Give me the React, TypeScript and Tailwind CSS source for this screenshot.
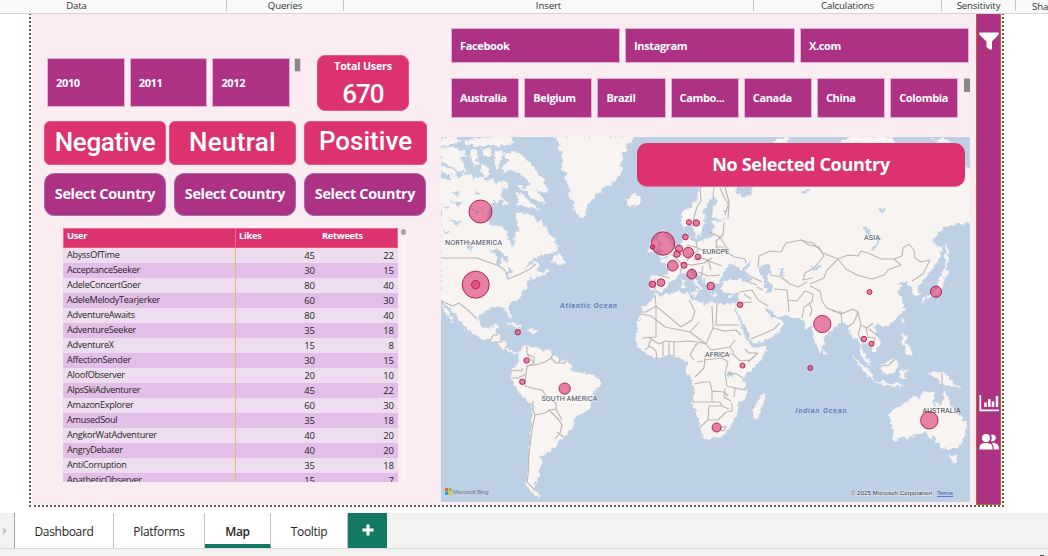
import type { ReactNode } from "react";
import { clsx } from "clsx";

const users: [string, number, number][] = [
  ["AbyssOfTime", 45, 22],
  ["AcceptanceSeeker", 30, 15],
  ["AdeleConcertGoer", 80, 40],
  ["AdeleMelodyTearjerker", 60, 30],
  ["AdventureAwaits", 80, 40],
  ["AdventureSeeker", 35, 18],
  ["AdventureX", 15, 8],
  ["AffectionSender", 30, 15],
  ["AloofObserver", 20, 10],
  ["AlpsSkiAdventurer", 45, 22],
  ["AmazonExplorer", 60, 30],
  ["AmusedSoul", 35, 18],
  ["AngkorWatAdventurer", 40, 20],
  ["AngryDebater", 40, 20],
  ["AntiCorruption", 35, 18],
  ["ApatheticObserver", 15, 7],
];

// Polygons use the same pixel grid as the report page.
const land = [
  // North America
  "441,178 447,181 452,176 460,179 463,173 470,174 475,179 481,177 487,182 492,178 495,184 501,181 504,188 500,195 503,199 497,203 493,200 491,207 488,212 486,219 490,225 502,227 507,233 508,239 512,247 515,245 514,238 518,232 519,226 516,218 517,213 524,213 530,215 534,215 536,223 541,220 545,226 548,233 554,240 558,246 556,251 549,254 541,254 536,258 529,263 523,270 532,264 537,262 539,267 537,270 543,273 547,269 549,272 541,276 535,278 530,278 527,283 527,288 522,291 521,296 518,300 511,303 508,308 512,317 509,318 506,311 503,307 493,307 487,309 480,315 478,320 482,328 488,330 491,326 499,325 495,333 500,335 499,341 505,341 507,349 515,352 518,354 511,353 503,348 495,342 488,340 480,337 468,331 462,323 455,314 448,305 441,302",
  "443,304 446,309 450,314 454,322 452,321 447,315 443,309",
  // Arctic islands
  "441,137 455,137 460,141 452,144 441,146",
  "463,142 475,139 490,137 512,137 512,144 500,146 488,145 478,147 472,144 465,145",
  "441,148 452,147 458,150 465,151 466,157 459,158 463,163 467,170 459,171 451,166 446,162 441,163",
  "441,165 447,168 455,171 457,176 449,174 441,172",
  "472,149 477,151 476,158 479,165 475,166 472,160 469,155",
  "482,149 491,149 492,154 488,158 484,156",
  "482,163 488,168 489,176 484,178 481,171",
  "495,152 501,151 504,153 500,160 498,169 495,166",
  "505,152 518,153 523,158 529,162 533,168 539,174 543,180 547,187 548,193 541,192 535,188 541,197 545,204 537,200 531,198 528,191 522,191 530,184 526,179 520,174 514,171 507,170 504,174 501,168 506,163 511,162 505,158",
  "516,192 523,195 528,201 532,203 540,210 532,208 525,205 517,205 519,199",
  "503,180 509,184 508,188 502,185",
  "501,199 507,203 509,206 503,205",
  "518,184 523,185 522,190 518,188",
  // Newfoundland and Great Lakes margins
  "558,253 562,257 566,264 559,266 554,261 551,263 554,256",
  // Greenland
  "555,137 560,144 558,150 564,153 561,158 563,163 561,170 568,172 565,178 568,184 570,190 569,196 574,204 573,209 577,214 583,219 586,210 588,203 594,199 595,194 602,192 603,187 610,185 615,180 620,174 623,168 618,164 624,160 621,154 628,150 625,145 631,143 633,137",
  "625,199 630,198 633,194 640,197 641,201 637,205 633,207 627,205 629,202",
  // Caribbean
  "507,324 513,322 519,326 524,329 518,328 512,325",
  "528,330 534,329 539,332 534,333 528,332",
  // South America
  "518,352 522,347 528,345 531,349 537,347 543,350 550,350 555,357 561,360 567,360 571,366 573,371 580,373 590,374 596,377 600,381 600,386 594,391 591,399 590,408 583,413 576,416 573,427 567,434 564,439 557,441 556,447 550,450 546,455 540,457 542,463 538,470 540,475 535,483 534,491 540,497 533,495 526,484 528,473 529,453 532,427 533,403 522,397 516,387 511,377 513,368 518,363 520,356",
  // Eurasia
  "700,187 697,200 691,207 683,212 681,222 685,228 690,224 694,229 696,237 700,235 702,225 705,220 703,212 709,199 715,197 717,202 712,210 713,218 722,219 731,218 721,221 712,222 715,229 711,232 715,236 707,240 695,242 690,240 688,233 684,235 684,242 677,247 672,255 666,258 660,260 668,266 668,275 653,275 651,278 651,287 655,291 661,292 667,287 669,282 675,278 682,273 686,272 695,283 699,288 697,292 702,287 695,280 690,272 692,268 698,274 704,280 707,287 711,291 713,285 720,282 723,273 727,267 735,263 737,267 742,269 745,265 752,259 749,267 745,270 753,280 746,282 740,279 731,280 722,283 723,291 730,293 739,292 738,302 735,306 740,316 746,327 750,336 752,343 763,341 777,335 781,328 784,323 779,319 773,319 764,309 768,308 778,316 786,316 797,318 804,321 806,328 812,327 815,342 820,352 824,343 824,337 834,328 842,322 848,326 852,337 858,339 862,350 866,357 871,366 865,361 860,352 862,341 867,343 874,351 880,346 879,337 873,327 878,324 884,327 897,319 904,309 902,300 897,291 902,286 896,285 907,281 912,290 914,296 919,295 917,287 927,276 938,261 942,248 936,245 932,242 941,230 947,225 967,223 970,220 974,220 974,168 963,168 930,180 870,184 790,182",
  "773,143 777,139 790,137 786,143",
  "837,144 843,140 852,137 895,137 891,140 900,144",
  "931,137 936,141 944,137 950,143 940,144",
  // Britain and Ireland
  "661,229 666,231 663,236 668,239 672,246 676,252 666,256 658,257 663,252 659,249 663,244 658,239",
  "651,243 658,240 658,249 651,252 648,248",
  // Mediterranean islands
  "682,280 685,280 685,288 682,288", "691,292 698,292 696,296", "729,296 734,295 731,298", "711,295 718,296 713,297",
  // Africa
  "735,304 728,304 717,304 711,300 706,306 698,301 690,299 689,293 677,292 661,296 655,294 650,302 643,307 642,314 637,323 638,331 635,340 640,348 647,354 655,359 665,356 674,355 681,359 688,361 686,371 693,380 695,390 692,402 697,413 700,427 704,438 712,439 722,436 730,427 733,420 737,414 737,406 746,398 746,389 743,378 754,367 763,357 767,346 753,349 748,342 742,331 739,319 735,311",
  "764,393 765,398 761,409 758,418 754,419 753,409 758,401",
  // South and east Asian islands
  "824,349 827,354 824,356",
  "853,357 861,363 870,371 874,379 868,377 860,367",
  "874,381 884,382 896,384 905,386 895,386 881,384",
  "881,366 888,362 895,358 898,363 896,371 889,374 883,373",
  "900,371 909,370 903,373 906,379 901,378 899,375",
  "903,333 907,338 905,343 911,350 913,356 908,355 905,348 902,341",
  "902,319 905,323 902,324",
  "929,373 936,372 944,373 951,380 960,388 951,386 940,383 936,378",
  "941,275 944,280 942,288 939,293 930,297 922,300 927,296 935,292",
  "945,268 949,273 944,278 941,274",
  "946,244 948,253 948,262 946,268 945,256",
  "921,301 925,298 923,303",
  // Australia
  "889,415 892,410 900,407 908,401 914,396 920,400 922,393 928,392 934,394 932,401 940,407 943,402 944,391 948,396 950,405 956,410 960,416 966,423 966,433 959,447 953,447 949,450 942,448 936,441 933,434 931,438 925,432 917,434 908,438 901,437 895,441 892,438 893,430",
  "950,456 957,455 956,461 953,463",
];

const lakes = [
  "759,267 765,263 771,266 772,272 767,275 768,281 773,286 772,291 768,292 764,287 764,280 760,274",
  "488,250 496,249 503,254 510,262 505,261 501,257 500,266 497,264 497,255",
  "508,267 514,271 508,275",
  "735,190 741,186 753,185 750,195 743,197",
  "870,251 874,246 879,237 881,239 876,249",
  "779,269 784,269 785,276 780,276",
  "727,374 731,371 733,375 729,378",
  "878,210 886,207 884,213 880,212",
  "862,227 869,228 872,237 867,234",
  "800,193 810,189 806,194",
  "811,268 820,265 822,268 814,270",
  "448,218 456,222 463,220 458,226",
  "449,199 456,203 463,200 458,206",
  "470,207 478,211 483,209 477,214",
  "722,210 727,208 726,212",
  "466,239 471,243 472,252 468,248",
  "449,189 456,193 462,190 458,197",
  "442,205 449,207 446,209",
  "442,230 448,232 452,231 447,235",
  "474,190 478,192 476,197",
];

const borders = [
  "441,258 477,258 485,261 497,265 505,270 508,279 520,274 530,269 536,264",
  "441,301 453,306 459,303 468,310 477,319",
  "490,341 493,335 498,335 M495,342 503,342 M505,348 508,346",
  "527,346 527,354 534,357 534,365 527,366 526,374 518,378 512,378 M527,354 535,365 545,362 551,358 553,354",
  "513,370 521,371 523,368 M551,358 556,363 565,363 M560,359 559,363 M566,361 564,364",
  "527,366 533,364 M526,374 525,386 532,388 542,390 547,397 556,403 556,409 549,410 545,413 535,415 533,410 533,401",
  "535,415 532,430 529,453 528,476 527,482 534,489 M549,410 559,420 562,425 560,433 555,439 M556,409 562,420 M557,432 565,438",
  "655,295 656,306 646,312 641,312 M656,306 681,327 692,320 695,311 689,300 M656,306 656,337 642,338 M642,314 651,316 665,327 690,332 699,322",
  "690,332 706,344 713,328 712,306 M717,304 716,325 739,325 M706,344 699,342 695,346 690,355 694,360 M676,342 689,341 697,342",
  "651,340 648,346 M648,337 659,344 665,341 676,342 M663,342 663,356 M669,342 669,356 M674,341 674,356 M645,350 650,346 656,351 657,359",
  "713,328 724,331 736,330 741,335 M706,344 711,350 730,347 735,340 M706,355 719,354 733,354 740,361 750,360 M730,347 734,353 M745,349 749,353 758,353 748,362",
  "705,355 704,368 695,377 M697,362 703,361 M694,384 703,382 710,382 712,391 724,392 728,396 M712,391 712,402 692,402",
  "704,360 722,358 728,362 725,373 727,386 735,388 734,397 M727,373 737,374 743,378 M734,388 746,390 M725,388 724,397 731,401",
  "712,402 720,402 722,406 709,406 708,420 700,427 M708,420 718,420 726,412 732,411 732,403 M722,406 729,409 M721,428 726,426 724,431 720,430",
  "658,275 670,278 M655,279 655,290 M672,255 680,262 682,267 680,273 M676,250 682,255 M687,245 695,247 707,252 M696,242 698,252 M681,263 692,265 704,263 712,258 M693,260 701,258 708,260 711,270 M706,260 722,266 M698,272 708,276 720,275 M703,266 701,278",
  "697,252 691,254 687,261 M718,254 716,241 723,235 724,222 M709,232 720,237 727,248 722,250 735,257 745,259 746,263 M715,247 724,247",
  "728,218 729,205 724,197 720,188 M700,187 701,201 697,207 694,217 693,226 M713,197 714,187 M725,187 729,202 725,215",
  "750,276 762,282 M746,281 757,285 M739,292 752,290 758,300 768,306 M740,303 752,302 M744,294 751,299 M738,302 742,307 M751,339 763,334 774,329 780,323",
  "757,287 763,290 M758,267 759,256 770,251 781,252 786,243 801,240 809,245 819,247 824,256 814,268 805,273 803,280 813,278 M770,275 781,277 790,284 798,287 807,282",
  "774,289 787,290 788,300 797,301 805,291 M788,300 789,312 M805,291 813,294 812,302 804,307 802,318 M809,302 812,310 810,316",
  "800,240 813,243 823,253 838,259 827,270 824,278 810,284 M838,259 848,255 858,256 861,251 868,253 881,259 894,259 902,256 M838,259 846,269 857,275 872,279 884,275 888,270 901,265 894,259 M902,256 903,248 909,244 914,250 915,258 921,262 930,260 923,274 912,281",
  "810,286 820,291 822,301 827,308 835,311 841,314 853,309 858,312 854,322 848,327 M827,308 836,312 841,312 842,324 M858,312 861,325 867,328 873,323 M861,325 858,334 862,342 M866,328 868,337 875,338 873,347 M869,329 878,336",
  "882,366 889,365 895,359 M942,373 942,386 M753,406 753,409",
];

const points: [number, number, number][] = [
  [480.5, 211.5, 11.5], [475.7, 284.7, 13.5], [475.7, 284.7, 4.2], [517.8, 332.3, 2.7], [526.5, 360.5, 2.7], [522.3, 381.8, 2.7], [564.7, 388.6, 5.6],
  [663, 243.5, 11.7], [652.5, 247, 2.3], [689, 222.3, 2.6], [696.3, 223, 3.2], [685.5, 237, 2.8], [679, 248.8, 3.6], [677, 254, 3.2], [688.3, 252.6, 5.3], [698, 256.8, 2.8], [672.7, 265.7, 5.3], [684, 265.2, 3], [691.8, 274.2, 4.8], [652.5, 284.3, 3.2], [661, 282.6, 3.8], [710.7, 286, 3.8], [740, 304.7, 2.8],
  [822.3, 324, 8.6], [869.5, 292, 2.5], [936, 291.7, 5.6], [863.9, 339, 2.7], [871.5, 343.7, 2.5], [810.3, 368, 2.5], [742.5, 365.6, 2.5], [716.6, 427.5, 4.5], [929.3, 420.3, 8.7],
];

function BubbleMap() {
  return (
    <svg viewBox="441 137 529 365" className="block h-[365px] w-[529px] bg-[#bed0e4]">
      <defs>
        <filter id="coast" filterUnits="userSpaceOnUse" x="437" y="133" width="537" height="373" colorInterpolationFilters="sRGB">
          <feTurbulence type="fractalNoise" baseFrequency="0.22" numOctaves="3" seed="7" />
          <feDisplacementMap in="SourceGraphic" scale="6" xChannelSelector="R" yChannelSelector="G" />
        </filter>
      </defs>
      <g filter="url(#coast)">
        <rect x="433" y="129" width="545" height="381" fill="#bed0e4" />
        {land.map((p) => <polygon key={p} points={p} fill="#f8f4f2" stroke="#f8f4f2" strokeWidth=".5" />)}
        {lakes.map((p) => <polygon key={p} points={p} fill="#bed0e4" />)}
      </g>
      {borders.map((d) => <path key={d} d={"M" + d} fill="none" stroke="#bbb6b4" strokeWidth="1.1" strokeLinejoin="round" />)}
      <g fill="#434755" fontFamily="Roboto, sans-serif" fontSize="7.3" stroke="#ffffff" strokeWidth="1.4" strokeOpacity=".7" paintOrder="stroke">
        <text x="445" y="245" textLength="57">NORTH AMERICA</text>
        <text x="541.5" y="401" textLength="56">SOUTH AMERICA</text>
        <text x="702.5" y="253.5" textLength="27">EUROPE</text>
        <text x="864" y="240" textLength="16">ASIA</text>
        <text x="705" y="357.3" textLength="24.5">AFRICA</text>
      </g>
      <g fill="#5672b8" fontFamily="Roboto, sans-serif" fontStyle="italic" fontWeight="500" fontSize="7.2">
        <text x="560" y="307.5" textLength="57">Atlantic Ocean</text>
        <text x="795.5" y="412.8" textLength="51">Indian Ocean</text>
      </g>
      <g fill="#dc3270" fillOpacity=".6" stroke="#ae2552" strokeWidth="1">
        {points.map(([x, y, r], i) => <circle key={i} cx={x} cy={y} r={r} />)}
      </g>
      <text x="922.5" y="413.3" textLength="38" fill="#434755" fontFamily="Roboto, sans-serif" fontSize="7.3">AUSTRALIA</text>
      <rect x="445" y="488" width="3.2" height="3.2" fill="#f26522" /><rect x="448.6" y="488" width="3.2" height="3.2" fill="#8dc63f" />
      <rect x="445" y="491.6" width="3.2" height="3.2" fill="#00aeef" /><rect x="448.6" y="491.6" width="3.2" height="3.2" fill="#ffc20e" />
      <g fontFamily="Liberation Sans, sans-serif" fontSize="6">
        <text x="453" y="494" textLength="35.5" fill="#707780">Microsoft Bing</text>
        <text x="851" y="495" textLength="81" fill="#20242a" stroke="#fff" strokeWidth="1" strokeOpacity=".6" paintOrder="stroke">© 2025 Microsoft Corporation</text>
        <text x="937" y="495" textLength="16" fill="#3c55ac">Terms</text>
      </g>
      <path d="M937 496.5h16" stroke="#3c55ac" strokeWidth=".7" />
    </svg>
  );
}

function Slice({ children, className }: { children: ReactNode; className: string }) {
  return (
    <div className={clsx("flex shrink-0 items-center border border-[#e2b2d6] bg-[#ad3283] pt-px pl-2 text-[11px] font-bold tracking-[-0.35px] text-white", className)}>
      {children}
    </div>
  );
}

function Sentiment({ children, className }: { children: ReactNode; className: string }) {
  return (
    <div className={clsx("flex h-11 items-center justify-center rounded-md border border-[#e2558a] bg-[#dc326f] font-[Roboto] text-[26px] leading-none font-medium text-white", className)}>
      {children}
    </div>
  );
}

function Group({ children, className }: { children?: ReactNode; className: string }) {
  return <div className={clsx("flex shrink-0 items-center justify-center border-r border-[#c8c6c4]", className)}>{children}</div>;
}

function Tab({ children, className }: { children: ReactNode; className: string }) {
  return <div className={clsx("flex items-center justify-center border-r border-[#c3c1bf] bg-white", className)}>{children}</div>;
}

export default function App() {
  return (
    <div className="flex h-[556px] w-[1048px] flex-col overflow-hidden bg-white font-['Open_Sans',sans-serif] text-[#252423]">
      <header className="z-10 flex h-[14px] shrink-0 border-b border-[#d8d5d5] bg-[#fafafa] text-[9.6px] leading-none tracking-[-0.1px] text-[#333]">
        <Group className="mb-0.5 w-[227px] pt-px pr-[73px]">Data</Group>
        <Group className="mb-0.5 w-[117px] pt-px">Queries</Group>
        <Group className="mb-0.5 w-[410px] pt-px">Insert</Group>
        <Group className="mb-0.5 w-[188px] pt-px">Calculations</Group>
        <Group className="mb-0.5 w-[74px] pt-px">Sensitivity</Group>
        <div className="pt-0.5 pl-4">Share</div>
      </header>

      <main className="-mt-px ml-[29px] flex h-[494px] w-[975px] shrink-0 border-x-2 border-b-2 border-dotted border-[#605e5c] bg-[#fbecf1] bg-clip-padding">
        <section className="flex w-[410px] shrink-0 flex-col pl-[13px]">
          <div className="mt-[42px] flex h-14 items-start">
            <div className="mt-[3px] ml-[3px] flex gap-[5px]">
              <Slice className="h-[49px] w-[77.7px]">2010</Slice>
              <Slice className="h-[49px] w-[77.7px]">2011</Slice>
              <Slice className="h-[49px] w-[77.6px]">2012</Slice>
            </div>
            <div className="mt-[3px] ml-1 h-[14px] w-[7px] border border-[#dcd3d6] bg-[#898886]" />
            <div className="ml-4 flex h-14 w-[92px] flex-col items-center rounded-lg border border-[#e2558a] bg-[#dc326f] text-white">
              <span className="mt-0.5 text-[10.7px] leading-4 font-bold tracking-[-0.2px]">Total Users</span>
              <span className="mt-2 font-[Roboto] text-[26px] leading-6 font-medium tracking-[-1px]">670</span>
            </div>
          </div>
          <div className="mt-2.5 flex">
            <Sentiment className="w-[122px] pb-0.5 tracking-[-0.3px]">Negative</Sentiment>
            <Sentiment className="ml-[3px] w-[127px] pb-0.5 tracking-[0.3px]">Neutral</Sentiment>
            <Sentiment className="ml-2 w-[123px] pb-1">Positive</Sentiment>
          </div>
          <div className="mt-2 flex gap-2">
            {[0, 1, 2].map((n) => (
              <div key={n} className="flex h-[43px] w-[122px] items-center justify-center rounded-[10px] border border-[#9c70ad] bg-[#ad3283] pb-px text-[14.4px] font-bold tracking-[-0.3px] text-white">
                Select Country
              </div>
            ))}
          </div>
          <div className="mt-3 ml-[19px] flex h-[254px] gap-[3px]">
            <div className="flex w-[335px] flex-col overflow-hidden text-[9.5px]">
              <div className="flex h-5 shrink-0 border border-[#e86b9a] border-b-[#ed586b] bg-[#dc326f] text-[9.3px] leading-[14px] font-bold tracking-[-0.3px] text-white">
                <div className="w-[172px] border-r border-[#e86b9a] pl-[3px]">User</div>
                <div className="w-[83px] pl-[3px]">Likes</div>
                <div className="pl-[3px]">Retweets</div>
              </div>
              {users.map(([name, likes, retweets], i) => (
                <div key={name} className={clsx("flex h-[15px] shrink-0 leading-[14px]", i % 2 ? "bg-[#e1bfe7]" : "bg-[#eedcf0]")}>
                  <div className="w-[173px] border-r border-[#f0b46c] pl-1 text-[9.1px] leading-[13px] tracking-[-0.27px]">{name}</div>
                  <div className="w-[79px] pt-px text-right">{likes}</div>
                  <div className="w-[79px] pt-px text-right">{retweets}</div>
                </div>
              ))}
            </div>
            <div className="h-[253px] w-1.5 rounded-full bg-[#fdf4f8] pt-px">
              <div className="h-1.5 w-[5px] rounded-full bg-[#aaa5a7]" />
            </div>
          </div>
        </section>

        <section className="w-[529px] shrink-0">
          <div className="mt-[15px] ml-2.5 flex gap-[5px]">
            <Slice className="h-[35px] w-[169px]">Facebook</Slice>
            <Slice className="h-[35px] w-[170px]">Instagram</Slice>
            <Slice className="h-[35px] w-[169px]">X.com</Slice>
          </div>
          <div className="mt-[15px] ml-2.5 flex">
            <div className="flex gap-[5px]">
              {["Australia", "Belgium", "Brazil", "Cambo...", "Canada", "China", "Colombia"].map((country) => (
                <Slice key={country} className="h-10 w-[68.2px]">{country}</Slice>
              ))}
            </div>
            <div className="ml-[6px] h-[14px] w-1.5 border-t border-[#c8c3c5] bg-[#898886]" />
          </div>
          <div className="relative mt-[19px]">
            <BubbleMap />
            <div className="absolute top-1.5 left-[196px] flex h-11 w-[328px] items-center justify-center rounded-[10px] border-b border-[#e96d9c] bg-[#dc326f] text-[18px] font-bold tracking-[-0.3px] text-white">
              No Selected Country
            </div>
          </div>
        </section>

        <aside className="ml-1.5 flex w-[25px] flex-col items-center border border-[#b9652c] bg-[#ad3283]">
          <svg viewBox="0 0 20 18" className="mt-[18px] h-[18px] w-5 shrink-0" fill="#fff">
            <path d="M.3.5h19.4v2L13 9.5v8h-2.5L7.5 15V9.5L.3 2.5z" />
          </svg>
          <svg viewBox="0 0 20 18" className="mt-[344px] h-[18px] w-5 shrink-0" fill="none" stroke="#fff">
            <path d="M1.3 1v15.3H20" strokeWidth="1.7" />
            <path d="M6.5 13V8.5M10.3 13V5M14 13V7.5M18 13V2" strokeWidth="2.5" />
          </svg>
          <svg viewBox="0 0 20 17" className="mt-[21px] h-[17px] w-5 shrink-0" fill="#fff">
            <circle cx="7" cy="5" r="4" />
            <path d="M12 1.7A3.5 3.5 0 1 1 12 8.2C13 6 13 4 12 1.7ZM.5 16.5v-2C.5 11 3.5 10 7 10s6.5 1 6.5 4.5v2ZM14.7 16.5v-2c0-2-.8-3.5-2-4.3 4-.5 7 1 7 4.3v2Z" />
          </svg>
        </aside>
      </main>

      <footer className="mt-1.5 flex h-[43px] shrink-0 flex-col bg-[#f3f2f1]">
        <div className="flex h-[36px] border-b border-[#d9d8d7] text-[12px] tracking-[-0.3px]">
          <div className="flex w-[15px] items-center border-r border-[#a3a1a0] pl-[3px]">
            <svg viewBox="0 0 4 8" className="h-2 w-1" fill="#c8c8c8"><path d="M0 0l4 4-4 4z" /></svg>
          </div>
          <Tab className="w-[99px] pt-[3px]">Dashboard</Tab>
          <Tab className="w-[91px] pt-[3px]">Platforms</Tab>
          <Tab className="w-[66px] border-b-4 border-b-[#137864] pt-[7px] font-semibold">Map</Tab>
          <Tab className="w-[77px] pt-[3px]">Tooltip</Tab>
          <div className="flex w-[39px] items-center justify-center bg-[#137864] pb-0.5">
            <svg viewBox="0 0 12 12" className="h-3 w-3" stroke="#fff" strokeWidth="3"><path d="M6 .5v11M.5 6h11" /></svg>
          </div>
        </div>
        <div className="mt-[6px] mr-1 ml-auto h-px w-1 bg-[#555]" />
      </footer>
    </div>
  );
}
